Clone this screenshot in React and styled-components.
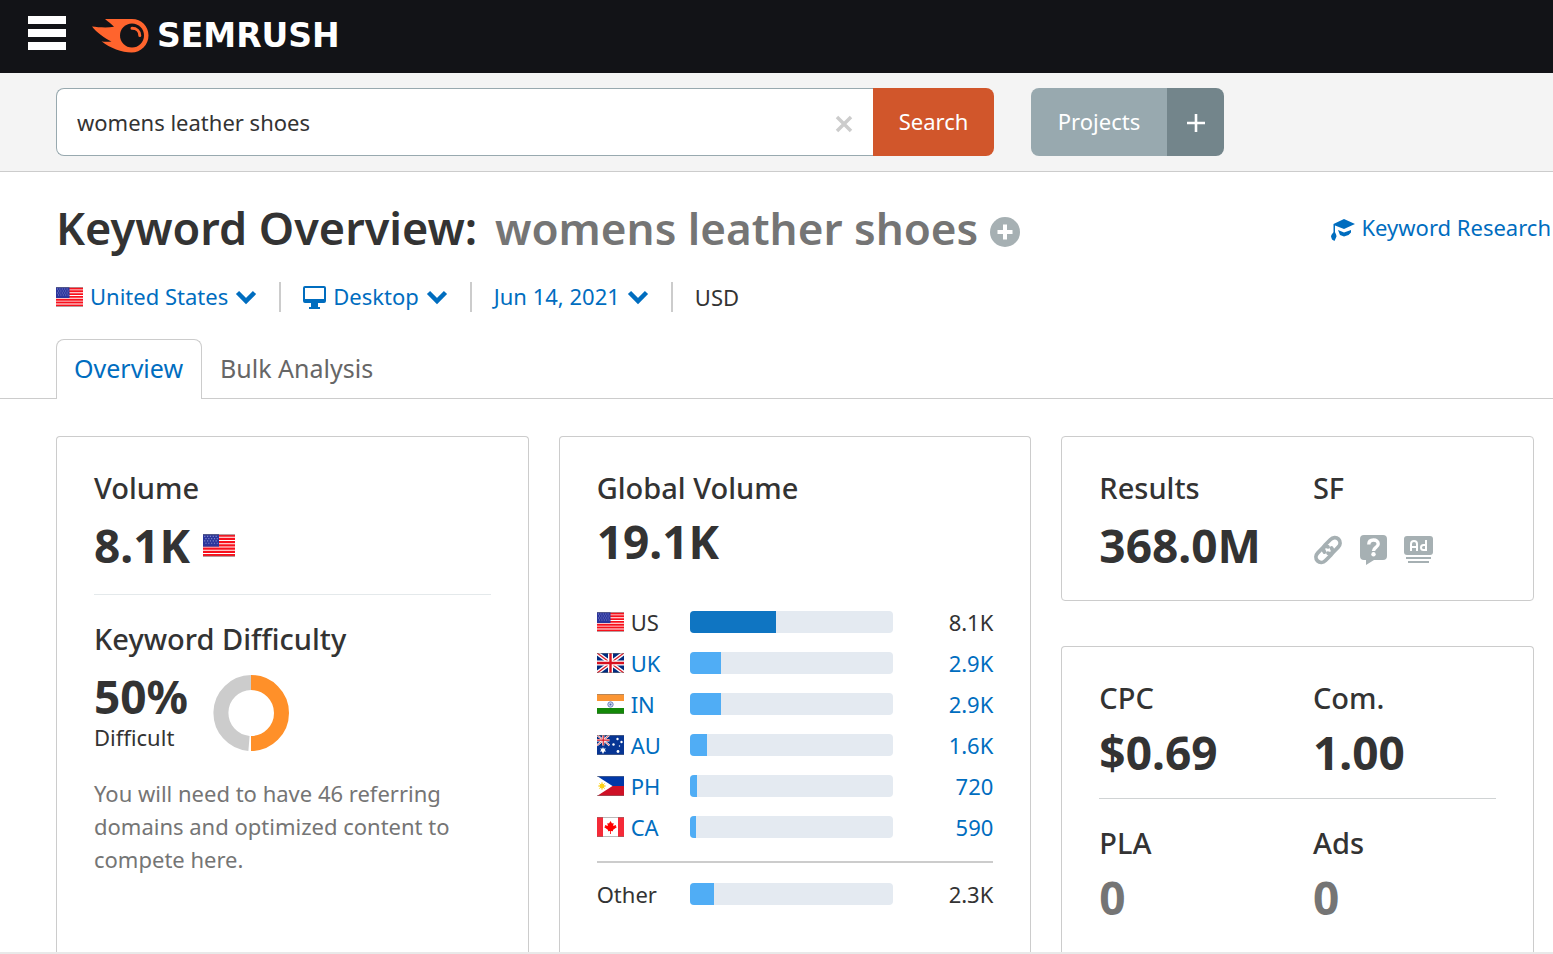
import React from 'react';
import styled, { createGlobalStyle } from 'styled-components';

const GlobalStyle = createGlobalStyle`
  * { box-sizing: border-box; }
  body {
    margin: 0;
    background: #fff;
    color: #333;
    font-family: "Noto Sans", "Open Sans", sans-serif;
    font-size: 22px;
    line-height: 32px;
  }
  button, input { font: inherit; }
  h1, h2, p { margin: 0; }
  svg { display: block; flex: none; }
`;

const Page = styled.div`
  display: flex;
  flex-direction: column;
  min-height: 100vh;
`;

const Header = styled.header`
  display: flex;
  align-items: center;
  gap: 26px;
  height: 73px;
  padding: 0 28px 2px;
  background: #121317;
`;

const MenuButton = styled.button`
  display: flex;
  flex-direction: column;
  gap: 5px;
  width: 38px;
  margin-bottom: 6px;
  padding: 0;
  border: 0;
  background: none;
  cursor: pointer;

  span { height: 8px; background: #fff; }
`;

const Logo = styled.a`
  display: flex;
  align-items: center;
  gap: 8px;
  color: #fff;
  font: bold 33px/40px "DejaVu Sans", sans-serif;
  text-decoration: none;
`;

const SearchBar = styled.div`
  display: flex;
  gap: 37px;
  padding: 15px 56px;
  border-bottom: 1px solid #ccc;
  background: #f4f4f4;
`;

const SearchForm = styled.form`
  display: flex;
  flex: 0 1 938px;
  height: 68px;
`;

const SearchField = styled.div`
  display: flex;
  flex: 1;
  align-items: center;
  min-width: 0;
  padding: 0 20px;
  border: 1px solid #98a9af;
  border-right: 0;
  border-radius: 8px 0 0 8px;
  background: #fff;
`;

const SearchInput = styled.input`
  flex: 1;
  min-width: 0;
  padding: 0;
  border: 0;
  outline: 0;
  background: none;
  color: #333;
`;

const IconButton = styled.button`
  padding: ${(p) => p.$drop || 0}px 0 0;
  border: 0;
  background: none;
  cursor: pointer;
`;

const SolidButton = styled.button`
  display: flex;
  align-items: center;
  justify-content: center;
  width: ${(p) => p.$width}px;
  height: 68px;
  padding: 0 0 2px;
  border: 0;
  border-radius: ${(p) => p.$radius};
  background: ${(p) => p.$color};
  color: #fff;
  cursor: pointer;

  svg { margin-top: 4px; }
`;

const ButtonGroup = styled.div`
  display: flex;
`;

const TitleRow = styled.div`
  display: flex;
  align-items: center;
  justify-content: space-between;
  padding: 26px 2px 0 56px;
`;

const TitleGroup = styled.div`
  display: flex;
  align-items: center;
  gap: 12px;
`;

const Title = styled.h1`
  font-size: 45px;
  font-weight: 600;
  line-height: 60px;
  white-space: nowrap;

  span { margin-left: 6px; color: #757575; font-size: 44px; }
`;

const CourseLink = styled.a`
  display: flex;
  align-items: center;
  gap: 7px;
  padding-bottom: 2px;
  color: #006dbf;
  text-decoration: none;
  white-space: nowrap;

  svg { margin-top: 6px; }
`;

const Filters = styled.div`
  display: flex;
  align-items: center;
  height: 30px;
  margin: 24px 56px 0;
`;

const Filter = styled.div`
  padding: 0 22px;
  border-left: 2px solid #ccc;
  line-height: 30px;

  &:first-child { padding-left: 0; border-left: 0; }
`;

const FilterButton = styled.button`
  display: flex;
  align-items: center;
  gap: 7px;
  height: 30px;
  padding: 0 0 2px;
  border: 0;
  background: none;
  color: #006dbf;
  cursor: pointer;

  svg { margin-top: 2px; }
`;

const Tabs = styled.nav`
  display: flex;
  height: 60px;
  margin-top: 27px;
  padding-left: 56px;
  box-shadow: inset 0 -1px #ccc;
`;

const Tab = styled.a`
  padding: 0 18px 0 17px;
  border: 1px solid ${(p) => (p.$active ? '#ccc' : 'transparent')};
  border-bottom: 0;
  border-radius: 8px 8px 0 0;
  background: ${(p) => (p.$active ? '#fff' : 'none')};
  color: ${(p) => (p.$active ? '#006dbf' : '#666')};
  font-size: 25px;
  line-height: 56px;
  text-decoration: none;
`;

const Cards = styled.main`
  display: grid;
  flex: 1;
  grid-template-columns: repeat(3, 1fr);
  gap: 30px;
  padding: 37px 19px 0 56px;
`;

const Column = styled.div`
  display: flex;
  flex-direction: column;
  gap: 45px;
`;

const Card = styled.section`
  flex: ${(p) => (p.$closed ? 'none' : 1)};
  padding: 37px 37px 26px;
  border: 1px solid #ccc;
  border-bottom-width: ${(p) => (p.$closed ? 1 : 0)}px;
  border-radius: ${(p) => (p.$closed ? '4px' : '4px 4px 0 0')};
`;

const Label = styled.h2`
  padding-bottom: 2px;
  font-size: 29px;
  font-weight: 500;
  line-height: 28px;
`;

const Value = styled.div`
  display: flex;
  align-items: center;
  gap: 13px;
  margin-top: ${(p) => p.$gap}px;
  padding-bottom: 2px;
  color: ${(p) => (p.$muted ? '#757575' : '#333')};
  font-size: 46px;
  font-weight: 700;
  line-height: 54px;
`;

const IconRow = styled.div`
  display: flex;
  align-items: center;
  gap: 17px;
  margin-top: 31px;
`;

const Divider = styled.hr`
  height: 1px;
  margin: ${(p) => p.$before}px 0 30px;
  border: 0;
  background: ${(p) => p.$color};
`;

const Difficulty = styled.div`
  display: flex;
  gap: 25px;
  margin-top: 18px;

  svg { margin-top: 2px; }
`;

const Percent = styled.div`
  font-size: 46px;
  font-weight: 700;
  line-height: 46px;
`;

const Caption = styled.div`
  line-height: 36px;
`;

const Note = styled.p`
  margin-top: 22px;
  color: #757575;
  line-height: 33px;
`;

const Pairs = styled.div`
  display: grid;
  grid-template-columns: 7fr 6fr;
`;

const CountryTable = styled.table`
  width: 100%;
  margin-top: 31px;
  border-spacing: 0;
  table-layout: fixed;

  th, td { height: 41px; padding: 0; font-weight: 400; }
  th { width: 93px; text-align: left; }
  td:last-child { width: 100px; text-align: right; }
`;

const Spacer = styled.tbody`
  && td { height: 14px; }
`;

const OtherRows = styled.tbody`
  && th, && td { height: 64px; border-top: 2px solid #ccc; }
`;

const Country = styled.span`
  display: flex;
  align-items: center;
  gap: 7px;
  color: #333;
`;

const CountryLink = styled.a`
  color: #006dbf;
  text-decoration: none;
`;

const Track = styled.div`
  height: 22px;
  overflow: hidden;
  border-radius: 4px;
  background: #e4eaf1;
`;

const Fill = styled.div`
  height: 100%;
  background: ${(p) => (p.$strong ? '#0f75c2' : '#50adf5')};
`;

const BottomStrip = styled.div`
  height: 3px;
  background: #e9e9e9;
`;

const UnionJack = () => (
  <>
    <path fill="#012b7f" d="M0 0h27v20H0z" />
    <path stroke="#fff" strokeWidth="4" d="M0 0l27 20M27 0L0 20" />
    <path stroke="#d8202e" strokeWidth="1.4" d="M0 0l27 20M27 0L0 20" />
    <path stroke="#fff" strokeWidth="5" d="M13.500 0v20M0 10h27" />
    <path stroke="#d8101f" strokeWidth="2.400" d="M13.500 0v20M0 10h27" />
  </>
);

const flagArt = {
  US: (
    <>
      <path fill="#fff" d="M0 0h27v20H0z" />
      <path stroke="#f8101c" strokeWidth="1.900" d="M0 1.500h27M0 4.300h27M0 7.100h27M0 9.900h27M0 12.700h27M0 15.500h27M0 18.400h27" />
      <path fill="#2b359c" d="M0 0h13.500v11H0z" />
      <path stroke="#8087cc" strokeWidth="1" strokeDasharray="1 1.400" d="M1 2h11.500M2 4h10.500M1 6h11.500M2 8h10.500" />
    </>
  ),
  UK: <UnionJack />,
  IN: (
    <>
      <path fill="#fff" d="M0 0h27v20H0z" />
      <path fill="#fb9533" d="M0 0h27v7H0z" />
      <path fill="#138808" d="M0 14h27v6H0z" />
      <circle cx="13.500" cy="10.500" r="2.700" fill="#cfd7ee" stroke="#6f83bd" />
      <circle cx="13.500" cy="10.500" r="1" fill="#4c64a8" />
    </>
  ),
  AU: (
    <>
      <path fill="#073594" d="M0 0h27v20H0z" />
      <g transform="scale(.46 .52)"><UnionJack /></g>
      <g fill="#fff">
        <path d="M6 12l.8 1.800 2-.6-1 1.800 1.400 1.400-2 .2L6 19l-1.200-2.400-2-.2L4.200 15l-1-1.800 2 .6z" />
        <circle cx="20.500" cy="4" r="1.200" />
        <circle cx="16.500" cy="9.500" r="1.200" />
        <circle cx="24.500" cy="7" r="1.200" />
        <circle cx="21" cy="16.500" r="1.400" />
        <circle cx="22.500" cy="11" r=".7" />
      </g>
    </>
  ),
  PH: (
    <>
      <path fill="#0038a8" d="M0 0h27v10H0z" />
      <path fill="#ce1126" d="M0 10h27v10H0z" />
      <path fill="#fff" d="M0 0l15.500 10L0 20z" />
      <circle cx="5" cy="10" r="2.500" fill="#fcd116" />
      <path stroke="#fcd116" strokeWidth=".8" d="M5 6v8M1 10h8M2.200 7.200l5.600 5.600M7.800 7.200l-5.600 5.600" />
    </>
  ),
  CA: (
    <>
      <path fill="#fff" d="M0 0h27v20H0z" />
      <path fill="#f52a38" d="M0 0h6v20H0zM21 0h6v20h-6z" />
      <path fill="#f00" d="M13.500 4l1.500 2.500 1.600-.6-.4 3 2.800-1-.2 1.500 1.200.6-4.100 3 .2 1.200-2.200-.3V17h-.8v-3.100l-2.200.3.200-1.200-4.100-3 1.200-.6-.2-1.500 2.800 1-.4-3 1.600.6z" />
    </>
  ),
};

const Flag = ({ code, width = 27, height = 20 }) => (
  <svg width={width} height={height} viewBox="0 0 27 20" preserveAspectRatio="none" fill="none" aria-hidden="true">
    {flagArt[code]}
    <path stroke="#777" strokeOpacity=".5" d="M0 .5h27M0 19.500h27" />
  </svg>
);

const Chevron = () => (
  <svg width="22" height="16" viewBox="0 0 22 16" fill="none" stroke="#006dbf" strokeWidth="4.500" aria-hidden="true">
    <path d="M2.500 3.500L11 12l8.500-8.500" />
  </svg>
);

const CometLogo = () => (
  <svg width="57" height="34" viewBox="0 0 57 34" aria-hidden="true">
    <path fill="#ff642d" d="M13 0h27c9.500 0 16.500 7.200 16.500 16.500S49 33.500 39.500 33.500C30 33.500 18 29 9.500 22.200c2.500.8 7 .7 10 .2C13 19.500 4.500 13.500 0 7.500c6 .8 15 1.500 22 .3C19.500 5 16 2.500 13 0z" />
    <circle cx="40" cy="16.500" r="12" fill="#121317" />
    <path stroke="#ff642d" strokeWidth="3" strokeLinecap="round" fill="none" d="M40 9.200c4.500 0 7.800 3 7.800 7.300" />
  </svg>
);

const LinkIcon = () => (
  <svg width="30" height="30" viewBox="0 0 30 30" fill="none" stroke="#a6b0b3" strokeWidth="3.800" strokeLinecap="round" aria-hidden="true">
    <path d="M11.500 17c-2-2.600-1.500-5 .5-7l5.500-5.500c2.300-2.300 5.800-2.600 8-.4 2.200 2.200 2 5.700-.3 8L20.500 17c-1.600 1.600-3.600 2-5.400 1.300" />
    <path d="M18.500 13c2 2.600 1.500 5-.5 7l-5.500 5.500c-2.300 2.300-5.800 2.600-8 .4-2.200-2.200-2-5.700.3-8L9.500 13c1.600-1.600 3.600-2 5.400-1.300" />
  </svg>
);

const QuestionIcon = () => (
  <svg width="27" height="30" viewBox="0 0 27 30" fill="none" aria-hidden="true">
    <path fill="#a6b0b3" d="M4 0h19q4 0 4 4v17q0 4-4 4h-9l-8 5v-5H4q-4 0-4-4V4q0-4 4-4z" />
    <path stroke="#fff" strokeWidth="3.400" d="M8.800 9.500c0-3 2-4.500 4.700-4.500s4.700 1.500 4.700 4c0 3.500-4.700 3.200-4.700 7" />
    <circle cx="13.500" cy="19.300" r="2.200" fill="#fff" />
  </svg>
);

const AdIcon = () => (
  <svg width="29" height="28" viewBox="0 0 29 28" fill="none" aria-hidden="true">
    <rect width="29" height="19" rx="3" fill="#a6b0b3" />
    <path stroke="#fff" strokeWidth="2" d="M7 15V8q0-3 3-3t3 3v7M7 11h6M22 4v11M22 9h-2.500q-2.500 0-2.500 2.500t2.500 2.500H22" />
    <path stroke="#a6b0b3" strokeWidth="2" d="M2 22h25M4 26h21" />
  </svg>
);

const CapIcon = () => (
  <svg width="24" height="22" viewBox="0 0 24 22" fill="#006dbf" aria-hidden="true">
    <path d="M13 0l11 5-11 5L4 6.500V13c0 1 1.500 2 1.500 4.500L3.500 22l-2.500-1.500-1-3C0 15 2.500 14 2.500 13V5z" />
    <path d="M7 11l6 2.500 7-2.500v2.500l-2.500 2.500-4.500 1.500-4-1.500z" />
  </svg>
);

const countries = [
  { code: 'US', share: 42.4, volume: '8.1K' },
  { code: 'UK', share: 15.2, volume: '2.9K' },
  { code: 'IN', share: 15.2, volume: '2.9K' },
  { code: 'AU', share: 8.4, volume: '1.6K' },
  { code: 'PH', share: 3.8, volume: '720' },
  { code: 'CA', share: 3.1, volume: '590' },
];

const Bar = ({ share, strong }) => (
  <Track>
    <Fill $strong={strong} style={{ width: `${share}%` }} />
  </Track>
);

const Metric = ({ label, gap, muted, children }) => (
  <div>
    <Label>{label}</Label>
    <Value $gap={gap} $muted={muted}>{children}</Value>
  </div>
);

export default function App() {
  return (
    <Page>
      <GlobalStyle />
      <Header>
        <MenuButton aria-label="Menu"><span /><span /><span /></MenuButton>
        <Logo href="#"><CometLogo />SEMRUSH</Logo>
      </Header>

      <SearchBar>
        <SearchForm onSubmit={(e) => e.preventDefault()}>
          <SearchField>
            <SearchInput aria-label="Keyword" defaultValue="womens leather shoes" />
            <IconButton type="button" aria-label="Clear" $drop={3}>
              <svg width="18" height="18" viewBox="0 0 18 18" stroke="#ccc" strokeWidth="3.500">
                <path d="M2 2l14 14M16 2L2 16" />
              </svg>
            </IconButton>
          </SearchField>
          <SolidButton type="submit" $width={121} $color="#d1562b" $radius="0 8px 8px 0">Search</SolidButton>
        </SearchForm>
        <ButtonGroup>
          <SolidButton $width={136} $color="#98a9af" $radius="8px 0 0 8px">Projects</SolidButton>
          <SolidButton $width={57} $color="#73858b" $radius="0 8px 8px 0" aria-label="Add project">
            <svg width="18" height="18" viewBox="0 0 18 18" stroke="#fff" strokeWidth="2.600">
              <path d="M9 0v18M0 9h18" />
            </svg>
          </SolidButton>
        </ButtonGroup>
      </SearchBar>

      <TitleRow>
        <TitleGroup>
          <Title>Keyword Overview: <span>womens leather shoes</span></Title>
          <IconButton aria-label="Add keyword" $drop={8}>
            <svg width="30" height="30" viewBox="0 0 30 30">
              <circle cx="15" cy="15" r="15" fill="#a6b0b3" />
              <path stroke="#fff" strokeWidth="4" d="M15 7.500v15M7.500 15h15" />
            </svg>
          </IconButton>
        </TitleGroup>
        <CourseLink href="#"><CapIcon />Keyword Research</CourseLink>
      </TitleRow>

      <Filters>
        <Filter>
          <FilterButton><Flag code="US" />United States<Chevron /></FilterButton>
        </Filter>
        <Filter>
          <FilterButton>
            <svg width="23" height="23" viewBox="0 0 23 23" fill="#006dbf" aria-hidden="true">
              <path fillRule="evenodd" d="M2 0h19q2 0 2 2v13q0 2-2 2h-6v4h2v2H6v-2h2v-4H2q-2 0-2-2V2q0-2 2-2zM2 2v11h19V2z" />
            </svg>
            Desktop<Chevron />
          </FilterButton>
        </Filter>
        <Filter>
          <FilterButton>Jun 14, 2021<Chevron /></FilterButton>
        </Filter>
        <Filter>USD</Filter>
      </Filters>

      <Tabs>
        <Tab href="#" $active>Overview</Tab>
        <Tab href="#">Bulk Analysis</Tab>
      </Tabs>

      <Cards>
        <Card>
          <Metric label="Volume" gap={14}>8.1K<Flag code="US" width={32} height={23} /></Metric>
          <Divider $before={20} $color="#e4e9eb" />
          <Label>Keyword Difficulty</Label>
          <Difficulty>
            <div>
              <Percent>50%</Percent>
              <Caption>Difficult</Caption>
            </div>
            <svg width="76" height="76" viewBox="0 0 76 76" fill="none" strokeWidth="15" aria-hidden="true">
              <path stroke="#ccc" d="M36 68.400A30.500 30.500 0 0 1 38 7.500" />
              <path stroke="#ff9029" d="M38 7.500a30.500 30.500 0 0 1 0 61" />
            </svg>
          </Difficulty>
          <Note>You will need to have 46 referring domains and optimized content to compete here.</Note>
        </Card>

        <Card>
          <Metric label="Global Volume" gap={10}>19.1K</Metric>
          <CountryTable>
            <tbody>
              {countries.map(({ code, share, volume }, i) => (
                <tr key={code}>
                  <th scope="row">
                    <Country>
                      <Flag code={code} />
                      {i === 0 ? code : <CountryLink href="#">{code}</CountryLink>}
                    </Country>
                  </th>
                  <td><Bar share={share} strong={i === 0} /></td>
                  <td>{i === 0 ? volume : <CountryLink href="#">{volume}</CountryLink>}</td>
                </tr>
              ))}
            </tbody>
            <Spacer aria-hidden="true"><tr><td colSpan={3} /></tr></Spacer>
            <OtherRows>
              <tr>
                <th scope="row">Other</th>
                <td><Bar share={11.8} /></td>
                <td>2.3K</td>
              </tr>
            </OtherRows>
          </CountryTable>
        </Card>

        <Column>
          <Card $closed>
            <Pairs>
              <Metric label="Results" gap={14}>368.0M</Metric>
              <div>
                <Label>SF</Label>
                <IconRow><LinkIcon /><QuestionIcon /><AdIcon /></IconRow>
              </div>
            </Pairs>
          </Card>
          <Card>
            <Pairs>
              <Metric label="CPC" gap={11}>$0.69</Metric>
              <Metric label="Com." gap={11}>1.00</Metric>
            </Pairs>
            <Divider $before={17} $color="#d0d3d4" />
            <Pairs>
              <Metric label="PLA" gap={11} muted>0</Metric>
              <Metric label="Ads" gap={11} muted>0</Metric>
            </Pairs>
          </Card>
        </Column>
      </Cards>
      <BottomStrip />
    </Page>
  );
}
